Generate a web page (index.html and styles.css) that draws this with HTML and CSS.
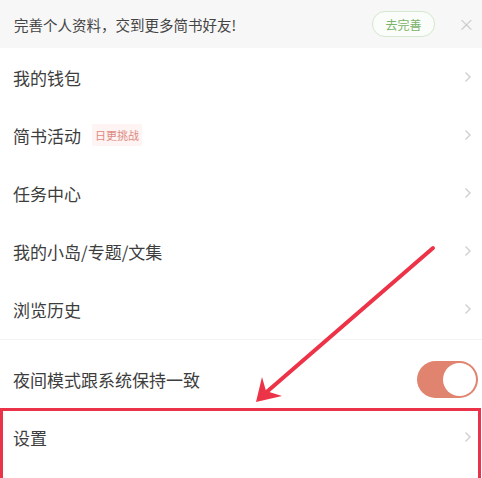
FILE: index.html
```html
<!DOCTYPE html>
<html lang="zh">
<head>
<meta charset="utf-8">
<link rel="stylesheet" href="styles.css">
</head>
<body>
<div class="page">
  <div class="banner">
    <span class="banner-text">完善个人资料，交到更多简书好友!</span>
    <span class="banner-btn">去完善</span>
    <span class="banner-close">×</span>
  </div>
  <div class="list">
    <div class="row"><span class="label">我的钱包</span><svg class="chev" viewBox="0 0 8 12"><polyline points="1.5,1.5 6,6 1.5,10.5"/></svg></div>
    <div class="row"><span class="label">简书活动<span class="tag">日更挑战</span></span><svg class="chev" viewBox="0 0 8 12"><polyline points="1.5,1.5 6,6 1.5,10.5"/></svg></div>
    <div class="row"><span class="label">任务中心</span><svg class="chev" viewBox="0 0 8 12"><polyline points="1.5,1.5 6,6 1.5,10.5"/></svg></div>
    <div class="row"><span class="label">我的小岛/专题/文集</span><svg class="chev" viewBox="0 0 8 12"><polyline points="1.5,1.5 6,6 1.5,10.5"/></svg></div>
    <div class="row"><span class="label">浏览历史</span><svg class="chev" viewBox="0 0 8 12"><polyline points="1.5,1.5 6,6 1.5,10.5"/></svg></div>
  </div>
  <div class="list section">
    <div class="row"><span class="label">夜间模式跟系统保持一致</span><span class="toggle"><span class="knob"></span></span></div>
    <div class="row"><span class="label">设置</span><svg class="chev" viewBox="0 0 8 12"><polyline points="1.5,1.5 6,6 1.5,10.5"/></svg></div>
  </div>
  <div class="highlight"></div>
  <svg class="arrow" viewBox="0 0 482 478" width="482" height="478">
    <line x1="433" y1="248" x2="262" y2="396" />
    <path class="head" d="M256 402 L262 377 L266 391 L282 396 Z"/>
  </svg>
</div>
</body>
</html>
```
FILE: styles.css
```css
html, body {
  margin: 0;
  padding: 0;
  background: #ffffff;
}
body {
  font-family: "Noto Sans CJK SC", "Noto Sans", sans-serif;
  width: 482px;
  height: 478px;
  overflow: hidden;
}
.page {
  position: relative;
  width: 482px;
  height: 478px;
}
.banner {
  height: 48px;
  background: #f7f7f7;
  display: flex;
  align-items: center;
  padding: 0 8px 0 14px;
  box-sizing: border-box;
}
.banner-text {
  flex: 1;
  font-size: 14.5px;
  color: #444;
}
.banner-btn {
  width: 61px;
  height: 24px;
  border: 1px solid #d3e8cf;
  border-radius: 13px;
  color: #79b26a;
  font-size: 12px;
  display: flex;
  align-items: center;
  justify-content: center;
  background: #fbfdfa;
}
.banner-close {
  width: 16px;
  margin-left: 23px;
  color: #c8c8c8;
  font-size: 20px;
  line-height: 20px;
  text-align: center;
  font-family: "DejaVu Sans", sans-serif;
  font-weight: 300;
}
.list {
  display: flex;
  flex-direction: column;
}
.section {
  border-top: 1px solid #f3f3f3;
  margin-top: 1px;
  padding-top: 10px;
}
.row {
  height: 58px;
  display: flex;
  align-items: center;
  justify-content: space-between;
  padding: 0 10px 0 13px;
}
.label {
  font-size: 17px;
  color: #3d3d3d;
  display: flex;
  align-items: center;
}
.tag {
  margin-left: 11px;
  font-size: 11px;
  color: #df8a82;
  background: #fdf4f3;
  padding: 3px 3px;
  border-radius: 2px;
}
.chev {
  width: 8px;
  height: 12px;
  fill: none;
  stroke: #cfcfcf;
  stroke-width: 1.4;
}
.toggle {
  width: 61px;
  height: 37px;
  border-radius: 19px;
  background: #e0836f;
  position: relative;
  margin-right: -6px;
}
.knob {
  position: absolute;
  right: 2px;
  top: 2px;
  width: 33px;
  height: 33px;
  border-radius: 50%;
  background: #fff;
}
.highlight {
  position: absolute;
  left: 0;
  top: 408px;
  width: 481px;
  height: 74px;
  border: 3px solid #ea3349;
  box-sizing: border-box;
}
.arrow {
  position: absolute;
  left: 0;
  top: 0;
  pointer-events: none;
}
.arrow line {
  stroke: #ec3347;
  stroke-width: 4;
  stroke-linecap: round;
}
.arrow .head {
  fill: #ec3347;
}
```
